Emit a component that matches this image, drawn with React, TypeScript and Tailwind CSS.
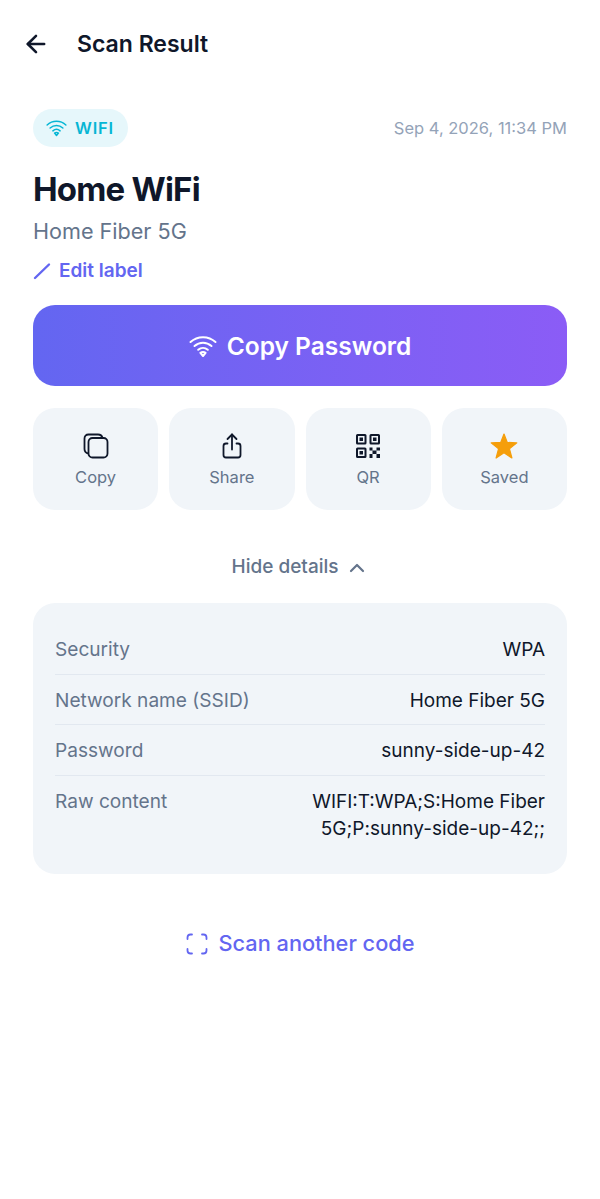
import React from 'react';
import { ArrowLeft, ChevronUp } from 'lucide-react';

const WifiGlyph = ({ className }: { className?: string }) => (
  <svg viewBox="0 0 28 24" fill="none" stroke="currentColor" strokeWidth="2" strokeLinecap="round" strokeLinejoin="round" className={className}>
    <path d="M1.500 8C8.500 1.500 19.500 1.500 26.500 8" />
    <path d="M5.500 12C10.500 7.500 17.500 7.500 22.500 12" />
    <path d="M9.200 15.800C12 13.400 16 13.400 18.800 15.800" />
    <path d="M11.400 18.800C13 17.700 15 17.700 16.600 18.800L14 22Z" />
  </svg>
);

const CopyGlyph = () => (
  <svg width="26" height="26" viewBox="0 0 26 26" fill="none" stroke="#0f172a" strokeWidth="1.8" strokeLinejoin="round">
    <rect x="5.500" y="5" width="19" height="19.500" rx="4" />
    <path d="M5.500 20.500C3 20 1.500 18.500 1.500 16V5.500C1.500 3 3 1.500 5.500 1.500H15C17.500 1.500 19 2.800 19.500 5" />
  </svg>
);

const ShareGlyph = () => (
  <svg width="26" height="26" viewBox="0 0 26 26" fill="none" stroke="#0f172a" strokeWidth="1.8" strokeLinecap="round" strokeLinejoin="round">
    <path d="M8.500 10.500H7C5.500 10.500 4.500 11.500 4.500 13V22C4.500 23.500 5.500 24.500 7 24.500H19C20.500 24.500 21.500 23.500 21.500 22V13C21.500 11.500 20.500 10.500 19 10.500H17.500" />
    <path d="M13 16.500V1.500" />
    <path d="M8.500 6L13 1.500L17.500 6" />
  </svg>
);

const QrGlyph = () => (
  <svg width="26" height="26" viewBox="0 0 26 26" fill="#0f172a">
    <path fillRule="evenodd" d="M1 2.500A1.500 1.500 0 0 1 2.500 1H10A1.500 1.500 0 0 1 11.500 2.500V10A1.500 1.500 0 0 1 10 11.500H2.500A1.500 1.500 0 0 1 1 10ZM3 3V9.500H9.500V3Z" />
    <path d="M4.500 4.500H8V8H4.500Z" />
    <path fillRule="evenodd" d="M14.500 2.500A1.500 1.500 0 0 1 16 1H23.500A1.500 1.500 0 0 1 25 2.500V10A1.500 1.500 0 0 1 23.500 11.500H16A1.500 1.500 0 0 1 14.500 10ZM16.500 3V9.500H23V3Z" />
    <path d="M18 4.500H21.500V8H18Z" />
    <path fillRule="evenodd" d="M1 16A1.500 1.500 0 0 1 2.500 14.500H10A1.500 1.500 0 0 1 11.500 16V23.500A1.500 1.500 0 0 1 10 25H2.500A1.500 1.500 0 0 1 1 23.500ZM3 16.500V23H9.500V16.500Z" />
    <path d="M4.500 18H8V21.500H4.500Z" />
    <path d="M14.500 14.500H17.500V17.500H14.500ZM21.500 14.500H25V17.500H21.500ZM17.500 17.500H21.500V21H17.500ZM14.500 21H17.500V25H14.500ZM21.500 21H25V25H21.500Z" />
  </svg>
);

const StarGlyph = () => (
  <svg width="28" height="26" viewBox="0 0 28 26" fill="#f59e0b" stroke="#f59e0b" strokeWidth="1.2" strokeLinejoin="round">
    <path d="M14 1L17.300 9.400L26.800 9.900L19.400 15.700L21.900 25L14 19.800L6.100 25L8.600 15.700L1.200 9.900L10.700 9.400Z" />
  </svg>
);

const ScanGlyph = () => (
  <svg width="22" height="22" viewBox="0 0 22 22" fill="none" stroke="#6366f1" strokeWidth="1.800" strokeLinecap="round">
    <path d="M1.500 6V4.500C1.500 2.500 2.500 1.500 4.500 1.500H6" />
    <path d="M16 1.500H17.500C19.500 1.500 20.500 2.500 20.500 4.500V6" />
    <path d="M20.500 16V17.500C20.500 19.500 19.500 20.500 17.500 20.500H16" />
    <path d="M6 20.500H4.500C2.500 20.500 1.500 19.500 1.500 17.500V16" />
  </svg>
);

const actions = [
  { label: 'Copy', icon: <CopyGlyph /> },
  { label: 'Share', icon: <ShareGlyph /> },
  { label: 'QR', icon: <QrGlyph /> },
  { label: 'Saved', icon: <StarGlyph /> },
];

const details = [
  { label: 'Security', value: 'WPA' },
  { label: 'Network name (SSID)', value: 'Home Fiber 5G' },
  { label: 'Password', value: 'sunny-side-up-42' },
  { label: 'Raw content', value: 'WIFI:T:WPA;S:Home Fiber 5G;P:sunny-side-up-42;;' },
];

const App: React.FC = () => {
  return (
    <div className="min-h-[1199px] bg-white font-['Inter',sans-serif]">
      {/* Header */}
      <div className="flex h-[88px] items-center pl-[22px]">
        <ArrowLeft size={28} strokeWidth={2.2} className="text-[#0f172a]" />
        <span className="ml-[27px] text-[23px] font-semibold text-[#0f172a]">Scan Result</span>
      </div>

      <div className="px-[33px] pt-[21px]">
        <div className="flex items-center justify-between">
          <div className="flex h-[38px] items-center gap-[8px] rounded-full bg-[#e6f7fb] pl-[13px] pr-[14px]">
            <WifiGlyph className="h-[18px] w-[21px] text-[#06b6d4]" />
            <span className="text-[16.5px] font-semibold tracking-[0.8px] text-[#06b6d4]">WIFI</span>
          </div>
          <span className="text-[16.5px] text-[#94a3b8]">Sep 4, 2026, 11:34 PM</span>
        </div>

        <h1 className="mt-[20px] text-[33px] leading-[44px] font-bold tracking-[-0.8px] text-[#0f172a]">Home WiFi</h1>
        <p className="mt-[5px] text-[21.6px] leading-[30px] text-[#64748b]">Home Fiber 5G</p>

        <div className="mt-[12px] flex h-[27px] items-center gap-[8px]">
          <svg width="18" height="18" viewBox="0 0 18 18" fill="none" stroke="#6366f1" strokeWidth="2.400" strokeLinecap="round" className="-mt-[1px]">
            <path d="M2 16L16 2.500" />
          </svg>
          <span className="text-[19px] font-semibold text-[#6366f1]">Edit label</span>
        </div>

        <button className="mt-[20px] flex h-[81px] w-full items-center justify-center gap-[10px] rounded-[22px] bg-gradient-to-r from-[#6366f1] to-[#8b5cf6] pt-[1px]">
          <WifiGlyph className="h-[24px] w-[28px] text-white" />
          <span className="text-[24.5px] font-semibold text-white">Copy Password</span>
        </button>

        <div className="mt-[22px] grid grid-cols-4 gap-[11px]">
          {actions.map(a => (
            <div key={a.label} className="flex h-[102px] flex-col items-center rounded-[22px] bg-[#f1f5f9] pt-[25px]">
              <div className="flex h-[26px] items-center justify-center">{a.icon}</div>
              <span className="mt-[6px] text-[16.5px] leading-[24px] font-normal text-[#64748b]">{a.label}</span>
            </div>
          ))}
        </div>

        <div className="mt-[44px] flex h-[27px] items-center justify-center gap-[7px] pl-[1px]">
          <span className="text-[19px] font-medium text-[#64748b]">Hide details</span>
          <ChevronUp size={24} strokeWidth={2.2} className="text-[#64748b]" />
        </div>

        <div className="mt-[22px] rounded-[22px] bg-[#f1f5f9] px-[22px] pt-[33px] pb-[31px]">
          {details.map((d, i) => (
            <div key={d.label} className={`flex justify-between gap-[16px] ${i > 0 ? 'border-t border-[#e2e8f0] pt-[12px]' : ''} ${i < details.length - 1 ? 'pb-[10px]' : ''}`}>
              <span className="shrink-0 text-[19.1px] leading-[27.5px] font-normal text-[#64748b]">{d.label}</span>
              <span className="max-w-[260px] text-right text-[19px] leading-[27.5px] font-normal text-[#0f172a]">{d.value}</span>
            </div>
          ))}
        </div>

        <div className="mt-[55px] flex h-[30px] items-center justify-center gap-[10px] pl-[1px]">
          <ScanGlyph />
          <span className="text-[21.75px] font-medium text-[#6366f1]">Scan another code</span>
        </div>
      </div>
    </div>
  );
};

export default App;
